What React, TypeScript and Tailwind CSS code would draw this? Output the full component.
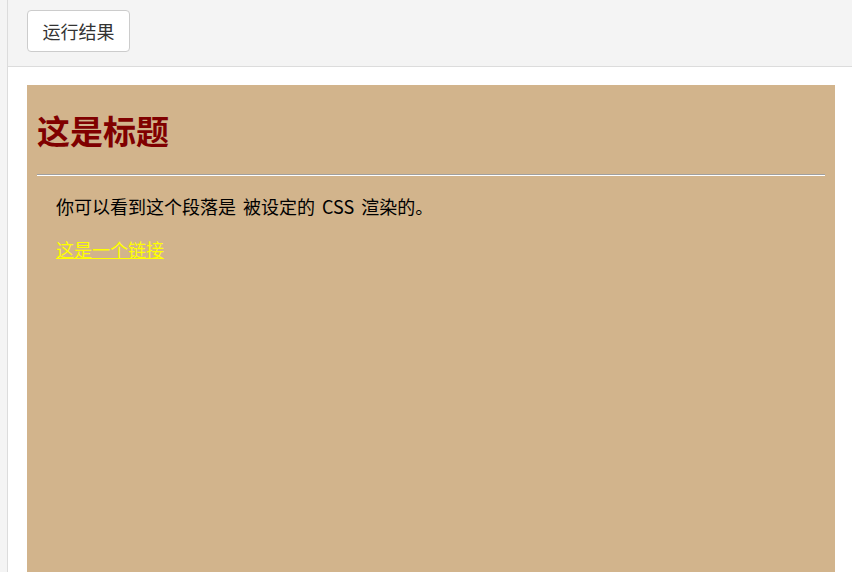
export default function App() {
  return (
    <div className="flex h-[572px] w-[852px] overflow-hidden bg-white font-['Noto_Sans_CJK_SC',sans-serif]">
      <div className="w-[8px] shrink-0 border-r border-[#dcdcdc] bg-[#f4f4f4]" />
      <div className="flex flex-1 flex-col">
        <div className="flex h-[67px] shrink-0 items-start border-b border-[#dcdcdc] bg-[#f4f4f4] pl-[19px] pt-[10px]">
          <button className="flex h-[42px] w-[103px] items-center justify-center rounded-[4px] border border-[#cccccc] bg-white text-[18px] text-[#333]">
            运行结果
          </button>
        </div>
        <div className="flex-1 pl-[19px] pr-[17px] pt-[18px]">
          <div className="h-full bg-[#d2b48c] px-[10px] pt-[10px]">
            <h1 className="mt-[15px] text-[33px] font-bold leading-[40px] text-[#800000]">这是标题</h1>
            <hr className="mt-[24px] border-t border-b border-t-[#a0a0a0] border-b-white" />
            <p className="ml-[19px] mt-[18px] text-[18px] leading-[24px] text-black [word-spacing:3px]">你可以看到这个段落是 被设定的 CSS 渲染的。</p>
            <p className="ml-[19px] mt-[19px] text-[18px] leading-[24px]">
              <a href="#" className="text-[#ffff00] underline">这是一个链接</a>
            </p>
          </div>
        </div>
      </div>
    </div>
  );
}
